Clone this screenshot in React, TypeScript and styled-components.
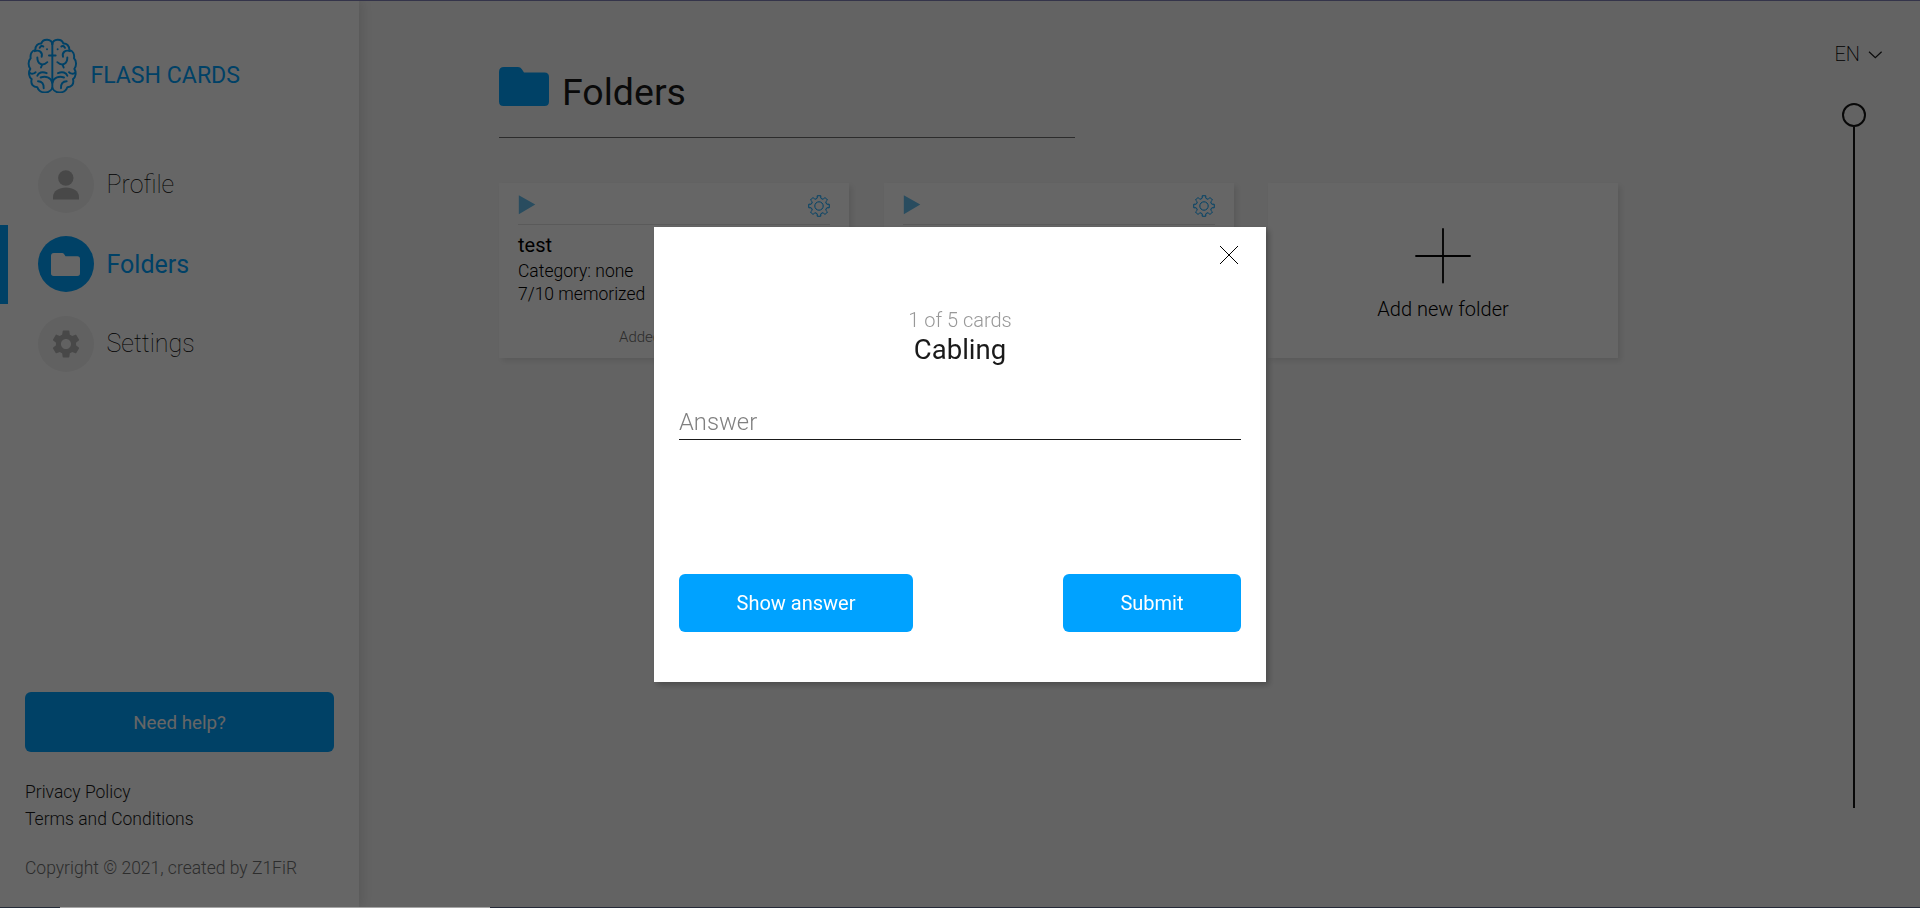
import React from "react";
import styled, { createGlobalStyle, css } from "styled-components";

const GlobalStyle = createGlobalStyle`
  *, *::before, *::after { box-sizing: border-box; }
  html, body { margin: 0; padding: 0; overflow: hidden; }
  body { font-family: Roboto, "Liberation Sans", sans-serif; color: #1a1a1a; background: #f9f9f9; }
  h1, h2, h3, p { margin: 0; font-weight: inherit; }
  button, input { font-family: inherit; }
  svg { display: block; flex: none; }
`;

const blue = "#00a2ff";

const Page = styled.div`
  display: flex;
  width: 1920px;
  height: 908px;
  background: #f8f8f8;
`;

const Sidebar = styled.aside`
  display: flex;
  flex-direction: column;
  width: 359px;
  height: 908px;
  padding-top: 38px;
  background: #fff;
  box-shadow: 3px 0 12px rgba(0, 0, 0, 0.12);
  z-index: 1;
`;

const Logo = styled.div`
  display: flex;
  align-items: flex-start;
  gap: 12.4px;
  height: 118px;
  padding-left: 27px;
  color: ${blue};
`;

const LogoText = styled.span`
  padding-top: 24px;
  font-size: 23.1px;
  line-height: 28px;
  white-space: nowrap;
`;

const Menu = styled.nav`
  display: flex;
  flex-direction: column;
  margin-top: -11px;
`;

const MenuItem = styled.a<{ $active?: boolean }>`
  display: flex;
  align-items: center;
  gap: 12.5px;
  height: 79.6px;
  padding-left: ${(p) => (p.$active ? 30 : 38)}px;
  border-left: ${(p) => (p.$active ? `8px solid ${blue}` : "0")};
  font-size: 25px;
  font-weight: ${(p) => (p.$active ? 400 : 100)};
  color: ${(p) => (p.$active ? blue : "#000")};
`;

const MenuIcon = styled.span<{ $active?: boolean }>`
  display: flex;
  align-items: center;
  justify-content: center;
  width: 56px;
  height: 56px;
  padding-right: 1px;
  border-radius: 50%;
  background: ${(p) => (p.$active ? blue : "#f2f2f2")};
  color: ${(p) => (p.$active ? "#fff" : "#b4b4b4")};
`;

const SidebarFooter = styled.footer`
  display: flex;
  flex-direction: column;
  margin-top: auto;
  padding: 0 25px 26px;
  font-size: 17.5px;
  font-weight: 300;
  line-height: 27px;
`;

const Button = styled.button<{ $width: number; $height: number; $size: number }>`
  width: ${(p) => p.$width}px;
  height: ${(p) => p.$height}px;
  padding: 1px 0 0;
  border: 0;
  border-radius: 6px;
  background: ${blue};
  color: #fff;
  font-size: ${(p) => p.$size}px;
  font-weight: 400;
`;

const FooterLinks = styled.div`
  display: flex;
  flex-direction: column;
  margin: 27px 0 22px;
`;

const Copyright = styled.p`
  color: #707070;
`;

const Main = styled.main`
  display: flex;
  flex-direction: column;
  width: 1259px;
  padding: 67px 0 0 140px;
`;

const Heading = styled.header`
  display: flex;
  gap: 13px;
  width: 576px;
  height: 71px;
  border-bottom: 1px solid #6e6e6e;
  color: ${blue};
`;

const Title = styled.h1`
  font-size: 37.5px;
  line-height: 50px;
  color: #1a1a1a;
`;

const Cards = styled.section`
  display: flex;
  justify-content: space-between;
  margin-top: 45px;
`;

const Card = styled.article<{ $centered?: boolean }>`
  display: flex;
  flex-direction: column;
  width: 350px;
  height: 175px;
  padding: 0 19px;
  background: #fff;
  box-shadow: 3px 3px 6px rgba(0, 0, 0, 0.1);
  ${(p) =>
    p.$centered &&
    css`
      align-items: center;
      padding-top: 45px;
    `}
`;

const CardBar = styled.div`
  display: flex;
  align-items: flex-start;
  justify-content: space-between;
  height: 42px;
  padding-top: 12px;
  border-bottom: 1px solid #e2e2e2;
`;

const CardTitle = styled.h3`
  margin: 7px 0 2px;
  font-size: 20px;
  line-height: 26px;
  color: #000;
`;

const CardLine = styled.p`
  font-size: 17.5px;
  font-weight: 300;
  line-height: 23px;
  color: #000;
`;

const CardDate = styled.p`
  margin: 21px 0 0 101px;
  font-size: 15px;
  font-weight: 300;
  line-height: 20px;
  color: #707070;
`;

const AddLabel = styled.p`
  margin-top: 7px;
  font-size: 20px;
  font-weight: 300;
  line-height: 36px;
  color: #000;
`;

const Rail = styled.div`
  display: flex;
  flex: 1;
  flex-direction: column;
  align-items: flex-end;
  padding: 42px 37px 0 0;
`;

const Language = styled.div`
  display: flex;
  align-items: center;
  gap: 8px;
  height: 24px;
  font-size: 20px;
  font-weight: 200;
  color: #000;
`;

const Slider = styled.div`
  display: flex;
  flex-direction: column;
  align-items: center;
  margin: 37px 17px 0 0;
  color: #151515;
`;

const Knob = styled.div`
  width: 24px;
  height: 24px;
  border: 2px solid;
  border-radius: 50%;
`;

const Track = styled.div`
  width: 2px;
  height: 681px;
  background: currentColor;
`;

const Overlay = styled.div`
  position: fixed;
  inset: 0;
  z-index: 10;
  display: flex;
  align-items: center;
  justify-content: center;
  background: rgba(0, 0, 0, 0.6);
`;

const Modal = styled.section`
  display: flex;
  flex-direction: column;
  width: 612px;
  height: 455px;
  padding: 18px 25px 0;
  background: #fff;
  box-shadow: 3px 3px 6px rgba(0, 0, 0, 0.25);
`;

const Close = styled.div`
  align-self: flex-end;
  margin-right: 2px;
`;

const Counter = styled.p`
  margin-top: 43px;
  text-align: center;
  font-size: 20px;
  font-weight: 300;
  line-height: 24px;
  color: #989898;
`;

const Term = styled.h2`
  text-align: center;
  font-size: 27.5px;
  line-height: 36px;
`;

const AnswerInput = styled.input`
  width: 100%;
  height: 40px;
  margin-top: 32px;
  padding: 5px 0 0;
  border: 0;
  border-bottom: 1px solid #1a1a1a;
  outline: 0;
  background: transparent;
  font-size: 23.75px;
  font-weight: 300;
  &::placeholder { color: #808080; opacity: 1; }
`;

const Actions = styled.div`
  display: flex;
  justify-content: space-between;
  margin-top: 134px;
`;

const Edge = styled.div<{ $bottom?: boolean }>`
  position: fixed;
  left: 0;
  right: 0;
  ${(p) => (p.$bottom ? "bottom: 0;" : "top: 0;")}
  z-index: 11;
  height: 1px;
  background: ${(p) =>
    p.$bottom
      ? "linear-gradient(90deg, #252c38 60px, #a6a6a6 60px, #a6a6a6 490px, #252a38 490px)"
      : "#34344a"};
`;

const BrainHalf = () => (
  <>
    <path d="M96 42C94 25 68 24 63 40C53 39 45 47 45 59C34 61 29 73 31 84C22 92 24 110 30 116C23 126 26 142 34 147C30 162 39 171 51 171C57 190 86 193 96 174" />
    <path d="M43 63C56 58 68 66 64 80" />
    <path d="M51 82C51 101 66 110 81 96M65 104L62 112" />
    <path d="M96 76H86" />
    <path d="M80 57h.1M58 53C61 47 66 46 69 49" />
    <path d="M28 128C34 132 42 131 46 126" />
    <path d="M51 137C54 127 66 123 79 129" />
    <path d="M96 158C92 141 75 137 61 142M53 153C65 153 71 162 70 174" />
  </>
);

const BrainIcon = () => (
  <svg width="51" height="55" viewBox="20 23.5 153 165" fill="none" stroke="currentColor" strokeWidth="5.8" strokeLinecap="round" strokeLinejoin="round">
    <BrainHalf />
    <g transform="translate(192 0) scale(-1 1)">
      <BrainHalf />
    </g>
    <path d="M96 40V174" />
  </svg>
);

const PersonIcon = () => (
  <svg width="26" height="30" viewBox="0 0 26 30" fill="currentColor">
    <circle cx="12.8" cy="8" r="7.7" />
    <path d="M0 29.5V27C0 21 6 17.5 13 17.5S26 21 26 27V29.5Z" />
  </svg>
);

const FolderIcon = ({ width, height }: { width: number; height: number }) => (
  <svg width={width} height={height} viewBox="0 0 50 39" preserveAspectRatio="none" fill="currentColor">
    <path d="M5 0H19Q21.5 0 22.7 2L25 5.5H45.5Q50 5.5 50 10V34.5Q50 39 45.5 39H4.5Q0 39 0 34.5V5Q0 0 5 0Z" />
  </svg>
);

const SettingsIcon = () => (
  <svg width="28" height="28" viewBox="2 2 20 20" fill="currentColor">
    <path d="M19.14 12.94c.04-.3.06-.61.06-.94 0-.32-.02-.64-.07-.94l2.03-1.58a.49.49 0 0 0 .12-.61l-1.92-3.32a.488.488 0 0 0-.59-.22l-2.39.96c-.5-.38-1.03-.7-1.62-.94l-.36-2.54a.484.484 0 0 0-.48-.41h-3.84c-.24 0-.43.17-.47.41l-.36 2.54c-.59.24-1.13.57-1.62.94l-2.39-.96c-.22-.08-.47 0-.59.22L2.74 8.87c-.12.21-.08.47.12.61l2.03 1.58c-.05.3-.09.63-.09.94s.02.64.07.94l-2.03 1.58a.49.49 0 0 0-.12.61l1.92 3.32c.12.22.37.29.59.22l2.39-.96c.5.38 1.03.7 1.62.94l.36 2.54c.05.24.24.41.48.41h3.84c.24 0 .44-.17.47-.41l.36-2.54c.59-.24 1.13-.56 1.62-.94l2.39.96c.22.08.47 0 .59-.22l1.92-3.32c.12-.22.07-.47-.12-.61l-2.01-1.58zM12 15.6c-1.98 0-3.6-1.62-3.6-3.6s1.62-3.6 3.6-3.6 3.6 1.62 3.6 3.6-1.62 3.6-3.6 3.6z" />
  </svg>
);

const PlayIcon = () => (
  <svg width="18" height="20" viewBox="0 0 18 20" fill="#66bfee">
    <path d="M.8 .3L17.3 9.5L.8 19.3Z" />
  </svg>
);

// Eight-toothed outline gear, one tooth per 45 degrees
const gearPath = Array.from({ length: 8 }, (_, i) => {
  const point = (r: number, deg: number) => {
    const a = ((i * 45 + deg - 90) * Math.PI) / 180;
    return `${(11 + r * Math.cos(a)).toFixed(2)} ${(11 + r * Math.sin(a)).toFixed(2)}`;
  };
  return `${i ? "L" : "M"}${point(8, -13)}L${point(10.4, -10)}L${point(10.4, 10)}L${point(8, 13)}Q${point(7.4, 22.5)} ${point(8, 32)}`;
}).join("") + "Z";

const GearOutline = () => (
  <svg width="22" height="22" viewBox="0 0 22 22" fill="none" stroke={blue} strokeWidth="1" strokeLinejoin="round">
    <path d={gearPath} />
    <circle cx="11" cy="11" r="4.2" />
  </svg>
);

const PlusIcon = () => (
  <svg width="56" height="56" viewBox="0 0 56 56" stroke="#000" strokeWidth="1.8" strokeLinecap="round">
    <path d="M28 1V54.5M1 28H55" />
  </svg>
);

const ChevronIcon = () => (
  <svg width="15" height="9" viewBox="0 0 15 9" fill="none" stroke="#1a1a1a" strokeWidth="1.2">
    <path d="M1 1.7L7.3 7.7L13.6 1.7" />
  </svg>
);

const CloseIcon = () => (
  <svg width="20" height="20" viewBox="0 0 20 20" stroke="#000" strokeWidth="1">
    <path d="M1 1L19 19M19 1L1 19" />
  </svg>
);

const FolderCard = ({ children }: { children?: React.ReactNode }) => (
  <Card>
    <CardBar>
      <PlayIcon />
      <GearOutline />
    </CardBar>
    {children}
  </Card>
);

export default function App() {
  return (
    <>
      <GlobalStyle />
      <Page>
        <Sidebar>
          <Logo>
            <BrainIcon />
            <LogoText>FLASH CARDS</LogoText>
          </Logo>
          <Menu>
            <MenuItem>
              <MenuIcon><PersonIcon /></MenuIcon>
              Profile
            </MenuItem>
            <MenuItem $active>
              <MenuIcon $active><FolderIcon width={29} height={23} /></MenuIcon>
              Folders
            </MenuItem>
            <MenuItem>
              <MenuIcon><SettingsIcon /></MenuIcon>
              Settings
            </MenuItem>
          </Menu>
          <SidebarFooter>
            <Button $width={309} $height={60} $size={18.75}>Need help?</Button>
            <FooterLinks>
              <span>Privacy Policy</span>
              <span>Terms and Conditions</span>
            </FooterLinks>
            <Copyright>Copyright © 2021, created by Z1FiR</Copyright>
          </SidebarFooter>
        </Sidebar>
        <Main>
          <Heading>
            <FolderIcon width={50} height={39} />
            <Title>Folders</Title>
          </Heading>
          <Cards>
            <FolderCard>
              <CardTitle>test</CardTitle>
              <CardLine>Category: none</CardLine>
              <CardLine>7/10 memorized</CardLine>
              <CardDate>Added</CardDate>
            </FolderCard>
            <FolderCard />
            <Card $centered>
              <PlusIcon />
              <AddLabel>Add new folder</AddLabel>
            </Card>
          </Cards>
        </Main>
        <Rail>
          <Language>
            EN
            <ChevronIcon />
          </Language>
          <Slider>
            <Knob />
            <Track />
          </Slider>
        </Rail>
      </Page>
      <Overlay>
        <Modal>
          <Close><CloseIcon /></Close>
          <Counter>1 of 5 cards</Counter>
          <Term>Cabling</Term>
          <AnswerInput placeholder="Answer" />
          <Actions>
            <Button $width={234} $height={58} $size={20}>Show answer</Button>
            <Button $width={178} $height={58} $size={20}>Submit</Button>
          </Actions>
        </Modal>
      </Overlay>
      <Edge />
      <Edge $bottom />
    </>
  );
}
